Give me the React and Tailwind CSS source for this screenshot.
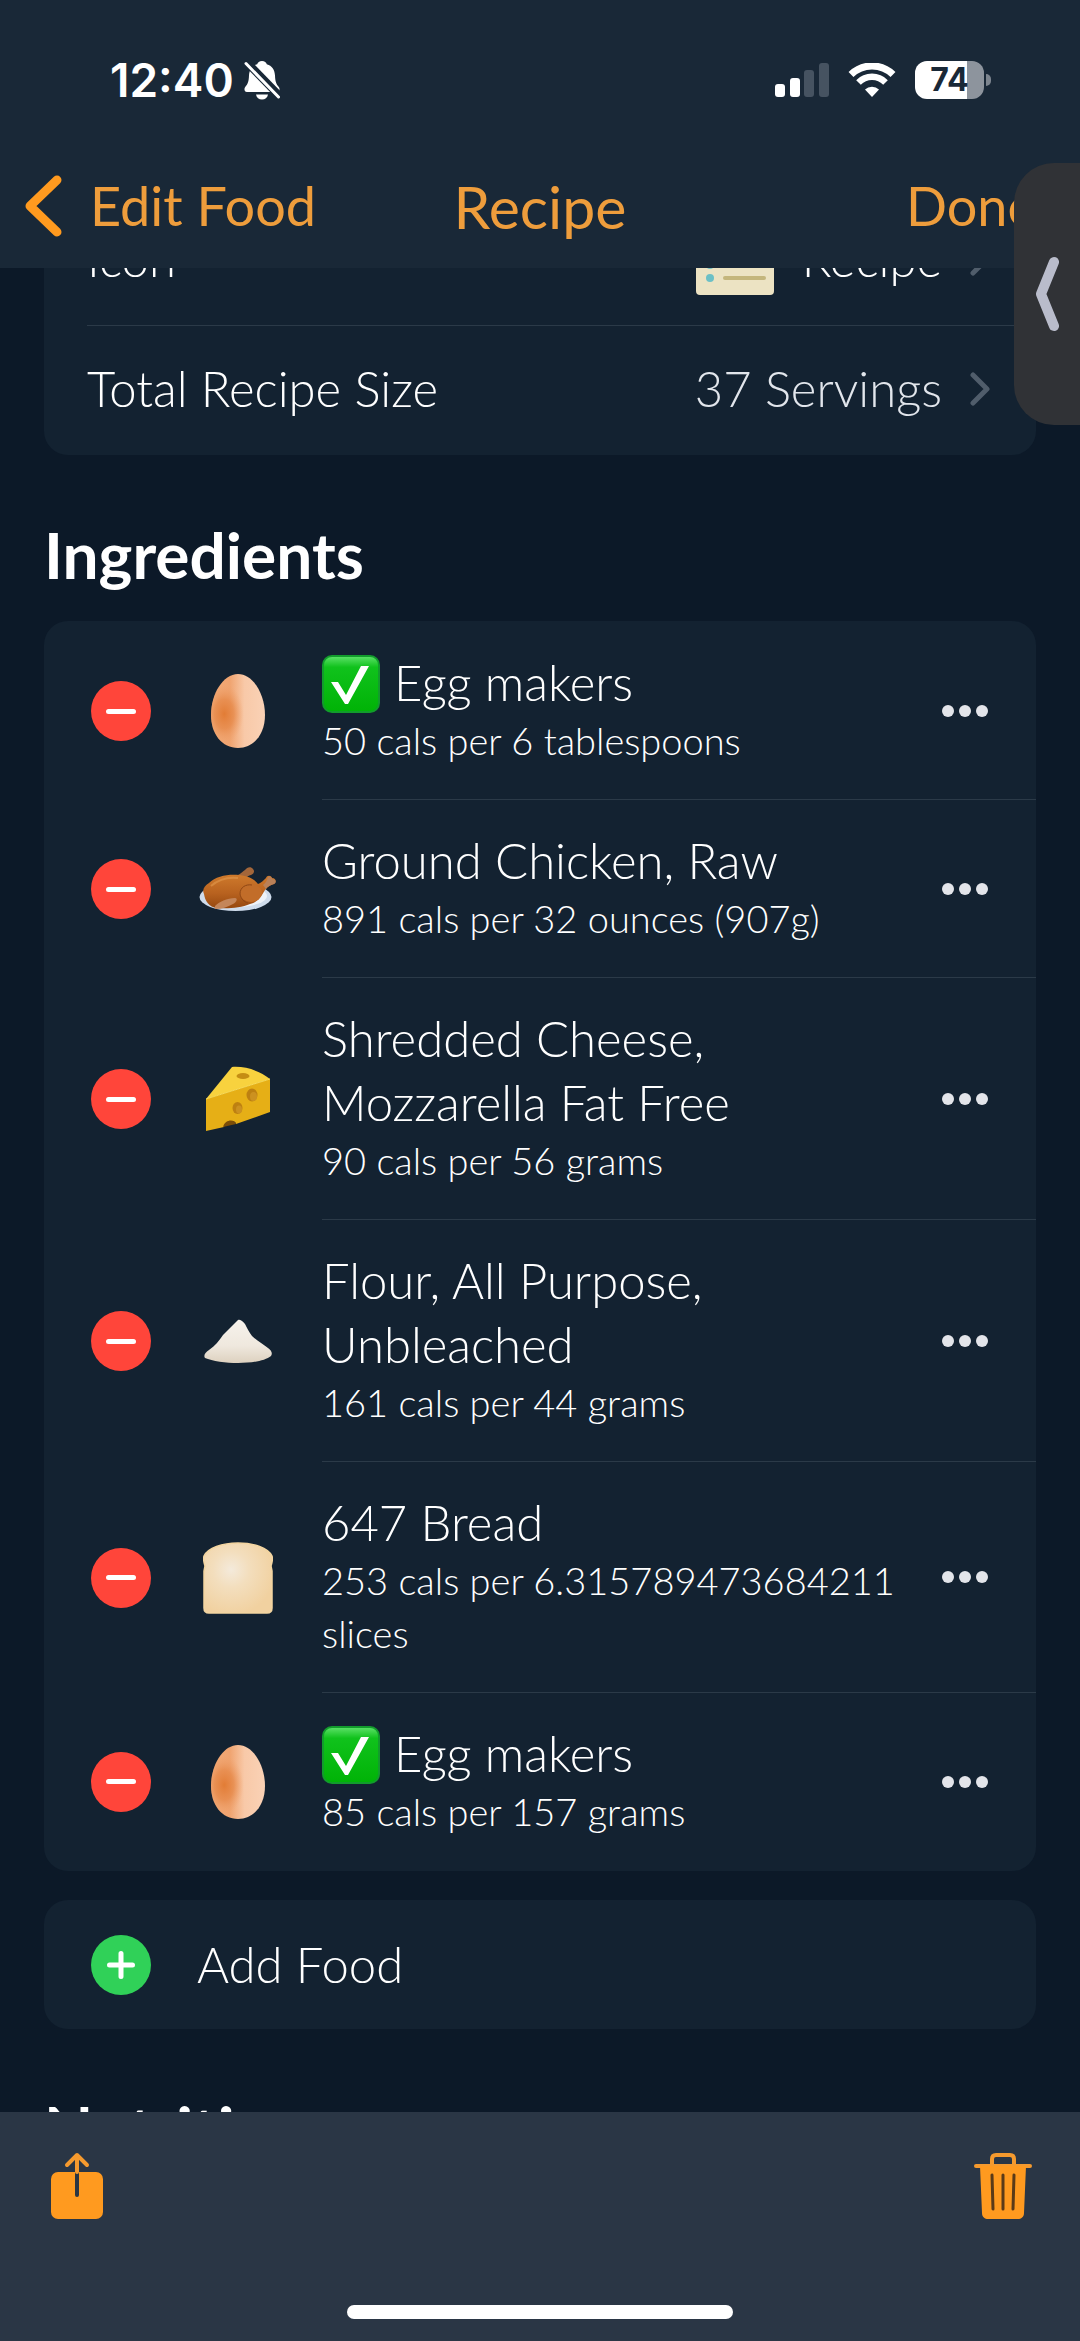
import React from 'react';

function BellOffIcon() {
  return (
    <svg viewBox="0 0 36 40" className="w-9 h-10" aria-label="Silent">
      <path d="M18 1c2.600 0 4.300 1.400 4.800 3.300 5.200 1.500 7.900 5.600 8.200 11.200.3 6.200 1 8.200 3.800 11.500 1.300 1.600 1 5-1.800 5H3c-2.800 0-3.100-3.400-1.800-5C4 23.700 4.700 21.700 5 15.500c.3-5.600 3-9.700 8.200-11.200C13.700 2.400 15.400 1 18 1z" fill="#fff" />
      <path d="M12 34.500h12c-.6 3.300-2.900 5-6 5s-5.400-1.700-6-5z" fill="#fff" />
      <path d="M-1 -1.500L38 38.500" stroke="#192837" strokeWidth="8" />
      <path d="M2 3.500L34.500 37" stroke="#fff" strokeWidth="3" strokeLinecap="round" />
    </svg>
  );
}

function SignalIcon() {
  return (
    <svg viewBox="0 0 54 34" className="w-[54px] h-[34px]" aria-label="Signal">
      <rect x="0" y="21" width="10" height="13" rx="3" fill="#fff" />
      <rect x="15" y="15" width="10" height="19" rx="3" fill="#fff" />
      <rect x="29" y="7" width="10" height="27" rx="3" fill="#465361" />
      <rect x="44" y="0" width="10" height="34" rx="3" fill="#465361" />
    </svg>
  );
}

function WifiIcon() {
  return (
    <svg viewBox="0 0 48 34" className="w-12 h-[34px]" fill="none" stroke="#fff" aria-label="Wi-Fi">
      <path d="M3 11.500a30 30 0 0 1 42 0" strokeWidth="7" />
      <path d="M10.500 19.500a19 19 0 0 1 27 0" strokeWidth="6.500" />
      <path d="M24 34l-7-7.500a10 10 0 0 1 14 0z" fill="#fff" stroke="none" />
    </svg>
  );
}

function Battery() {
  return (
    <div className="flex items-center gap-[2px]">
      <div className="w-[69px] h-[38px] rounded-xl bg-linear-to-r from-white from-75% to-[#8d949d] to-75% flex items-center justify-center text-[32px] leading-none font-bold text-[#192837]">
        74
      </div>
      <div className="w-[5px] h-3 rounded-r-full bg-[#7d858f]" />
    </div>
  );
}

function Chevron() {
  return (
    <svg viewBox="0 0 20 34" className="w-5 h-[34px]" fill="none" stroke="#505d6b" strokeWidth="5" strokeLinecap="round" strokeLinejoin="round" aria-hidden="true">
      <path d="M3 3l14 14L3 31" />
    </svg>
  );
}

function RecipeCardIcon() {
  return (
    <svg viewBox="0 0 78 72" className="w-[78px] h-[72px]" aria-hidden="true">
      <rect width="78" height="72" rx="4" fill="#ece3c3" />
      <rect width="78" height="14" rx="4" fill="#d9604f" />
      {[26, 42, 55].map((y) => (
        <g key={y}>
          <circle cx="14" cy={y} r="4" fill="#6cc0c6" />
          <path d={`M29 ${y}h39`} stroke="#c4b67c" strokeWidth="4" strokeLinecap="round" />
        </g>
      ))}
    </svg>
  );
}

function EggIcon() {
  return (
    <svg viewBox="0 0 54 74" className="w-[54px] h-[74px]" aria-hidden="true">
      <defs>
        <linearGradient id="eggBase" x1="0" x2="1" y1="0" y2="0">
          <stop offset="0" stopColor="#f2ab78" />
          <stop offset="0.35" stopColor="#f0a470" />
          <stop offset="0.62" stopColor="#f8c9a8" />
          <stop offset="1" stopColor="#fad2b6" />
        </linearGradient>
        <radialGradient id="eggShade" cx="0.25" cy="0.54" r="0.4" gradientTransform="translate(0.02 0) scale(0.9 1)">
          <stop offset="0" stopColor="#e27c35" />
          <stop offset="0.5" stopColor="#e58645" stopOpacity="0.7" />
          <stop offset="1" stopColor="#ee9f69" stopOpacity="0" />
        </radialGradient>
      </defs>
      <path d="M27 0c15 0 27 20 27 41 0 19-11 33-27 33S0 60 0 41C0 20 12 0 27 0z" fill="url(#eggBase)" />
      <path d="M27 0c15 0 27 20 27 41 0 19-11 33-27 33S0 60 0 41C0 20 12 0 27 0z" fill="url(#eggShade)" />
    </svg>
  );
}

function ChickenIcon() {
  return (
    <svg viewBox="0 0 78 44" className="w-[78px] h-11" aria-hidden="true">
      <defs>
        <linearGradient id="roast" x1="0" x2="0" y1="0" y2="1">
          <stop offset="0" stopColor="#cf7a2c" />
          <stop offset="0.55" stopColor="#b8621f" />
          <stop offset="1" stopColor="#96480f" />
        </linearGradient>
      </defs>
      <ellipse cx="36.500" cy="30" rx="36" ry="14" fill="#cfdcec" />
      <ellipse cx="37" cy="29" rx="31" ry="11" fill="#eef3f9" />
      <path d="M34 9c6 0 9-4 12-6 2-3 6-4 8-1 2 2 1 5-2 6-3 0-5 4-9 6z" fill="#a3663a" />
      <path d="M5 27c-2-4 0-8 5-11C17 9 29 7 40 8c11 1 16 5 19 9 3-1 5-3 8-6 1-3 5-3 6 0 4 0 5 4 2 6-3 1-6 2-9 6-4 7-7 12-15 14-9 4-23 5-33 4C10 40 6 34 5 27z" fill="url(#roast)" />
      <path d="M64 18c3-2 4-5 5-8 2-1 4 0 4 2 4 0 5 4 2 5-3 1-6 2-8 5z" fill="#b98058" />
      <ellipse cx="52" cy="26" rx="11" ry="9" fill="#c26d29" />
      <path d="M41 27c0-7 6-10 12-9M41 27c1 5 4 8 8 9" fill="none" stroke="#8f4714" strokeWidth="1" />
      <path d="M16 39c4-4 12-8 20-8 3 0 2 4-2 6-5 3-12 5-18 5z" fill="#c4865a" />
      <path d="M12 19c8-7 18-9 27-8" fill="none" stroke="#de9449" strokeWidth="2" opacity="0.7" />
    </svg>
  );
}

function CheeseIcon() {
  return (
    <svg viewBox="0 0 66 66" className="w-[66px] h-[66px]" aria-hidden="true">
      <path d="M1 33L27 1c14-1 28 4 38 12L1 33z" fill="#f8d23e" />
      <path d="M1 33L65 13v33l-34 12c0-4-10-5-12 3L1 65z" fill="#e6af16" />
      <path d="M1 33L65 13" stroke="#fbdc58" strokeWidth="1" />
      <path d="M18 61c2-8 12-8 13-3z" fill="#7b4d08" />
      <ellipse cx="38" cy="10" rx="6.500" ry="3" fill="#c58e13" />
      <ellipse cx="47" cy="29" rx="5.500" ry="6.500" fill="#bd8011" />
      <ellipse cx="48.500" cy="30.500" rx="3.500" ry="4.500" fill="#cc9120" />
      <ellipse cx="32.500" cy="42" rx="5" ry="6" fill="#bd8011" />
      <ellipse cx="34" cy="43.500" rx="3" ry="4" fill="#cc9120" />
    </svg>
  );
}

function FlourIcon() {
  return (
    <svg viewBox="0 0 68 44" className="w-[68px] h-11" aria-hidden="true">
      <defs>
        <linearGradient id="flour" x1="0" x2="0" y1="0" y2="1">
          <stop offset="0" stopColor="#f6f2ec" />
          <stop offset="0.6" stopColor="#efe8de" />
          <stop offset="1" stopColor="#ddd1bf" />
        </linearGradient>
      </defs>
      <path d="M34 1c3-1 5 2 7 4 2 4 4 8 7 12 5 5 11 8 16 12 3 2 5 5 3 8-6 5-20 7-33 7-12 0-26-2-33-5-2-3 1-6 4-8 6-4 10-9 14-15C24 11 29 6 34 1z" fill="url(#flour)" />
    </svg>
  );
}

function BreadIcon() {
  return (
    <svg viewBox="0 0 70 72" className="w-[70px] h-[72px]" aria-hidden="true">
      <defs>
        <radialGradient id="crumb" cx="0.4" cy="0.38" r="0.65">
          <stop offset="0" stopColor="#f4eadb" />
          <stop offset="0.4" stopColor="#f3debd" />
          <stop offset="1" stopColor="#f1d1a0" />
        </radialGradient>
      </defs>
      <path d="M1 14C5 6 19 1 35 1s30 5 34 13c1 4 0 7-1 10l1 5v37c0 3-2 5-5 5H6c-3 0-5-2-5-5V29l1-5c-1-3-2-6-1-10z" fill="url(#crumb)" stroke="#f3d5a0" strokeWidth="1.500" />
    </svg>
  );
}

function CheckMarkIcon() {
  return (
    <svg viewBox="0 0 58 58" className="inline-block align-[-12px] w-[58px] h-[58px] mr-[14px]" role="img" aria-label="Check">
      <defs>
        <linearGradient id="gloss" x1="0" x2="0" y1="0" y2="1">
          <stop offset="0" stopColor="#5fe36b" />
          <stop offset="0.2" stopColor="#10c21c" />
          <stop offset="1" stopColor="#00b306" />
        </linearGradient>
      </defs>
      <rect x="1" y="1" width="56" height="56" rx="9" fill="url(#gloss)" stroke="#129c2c" strokeWidth="2" />
      <path d="M9 27h7l8 13 15-29h8L26 49h-3z" fill="#fff" />
    </svg>
  );
}

function ShareIcon() {
  return (
    <svg viewBox="0 0 54 68" className="w-[54px] h-[68px]" fill="none" aria-hidden="true">
      <rect x="1" y="20" width="52" height="47" rx="7" fill="#ff9a1f" />
      <path d="M27 20v23" stroke="#2b3643" strokeWidth="4" strokeLinecap="round" />
      <path d="M27 20V3M17 13L27 3l10 10" stroke="#f59a2e" strokeWidth="4" strokeLinecap="round" strokeLinejoin="round" />
    </svg>
  );
}

function TrashIcon() {
  return (
    <svg viewBox="0 0 58 68" className="w-[58px] h-[68px]" fill="none" strokeLinecap="round" aria-hidden="true">
      <path d="M18 13V7c0-3 2-4 4-4h14c2 0 4 1 4 4v6" stroke="#f59a2e" strokeWidth="4" />
      <path d="M2 14h54" stroke="#f59a2e" strokeWidth="4" />
      <path d="M6 14h46l-2 47c0 4-3 6-6 6H14c-3 0-6-2-6-6z" fill="#ff9a1f" />
      <path d="M18 23l1 34M29 23v34M40 23l-1 34" stroke="#5a3a18" strokeWidth="3" />
    </svg>
  );
}

const ingredients = [
  { icon: EggIcon, name: 'Egg makers', checked: true, detail: '50 cals per 6 tablespoons' },
  { icon: ChickenIcon, name: 'Ground Chicken, Raw', detail: '891 cals per 32 ounces (907g)' },
  { icon: CheeseIcon, name: 'Shredded Cheese, Mozzarella Fat Free', detail: '90 cals per 56 grams' },
  { icon: FlourIcon, name: 'Flour, All Purpose, Unbleached', detail: '161 cals per 44 grams' },
  { icon: BreadIcon, name: '647 Bread', detail: '253 cals per 6.315789473684211 slices' },
  { icon: EggIcon, name: 'Egg makers', checked: true, detail: '85 cals per 157 grams' },
];

function IngredientRow({ item, last }) {
  const Icon = item.icon;
  return (
    <li className="flex items-stretch pl-[47px]">
      <div className="flex items-center shrink-0">
        <button aria-label={`Remove ${item.name}`} className="size-[60px] rounded-full bg-[#ff453a] flex items-center justify-center">
          <span className="w-[30px] h-[5px] rounded-full bg-white" />
        </button>
        <div className="w-[171px] pl-[2px] flex justify-center">
          <Icon />
        </div>
      </div>
      <div className={`flex-1 flex items-center pr-12 ${last ? '' : 'border-b border-[#2b3a48]'}`}>
        <div className="flex-1 pt-7 pb-8 pr-10">
          <h3 className="text-[49px] leading-[64px]">
            {item.checked && <CheckMarkIcon />}
            {item.name}
          </h3>
          <p className="text-[38px] leading-[53px]">{item.detail}</p>
        </div>
        <button aria-label={`More options for ${item.name}`} className="flex gap-[5px]">
          <span className="size-[12px] rounded-full bg-[#e3e5ea]" />
          <span className="size-[12px] rounded-full bg-[#e3e5ea]" />
          <span className="size-[12px] rounded-full bg-[#e3e5ea]" />
        </button>
      </div>
    </li>
  );
}

export default function App() {
  return (
    <div className="relative h-screen flex flex-col bg-[#0c1928] text-white font-light font-['Lato',sans-serif] overflow-hidden">
      <header className="shrink-0 bg-[#192837]">
        <div className="flex items-center justify-between h-[160px] pl-[110px] pr-[89px] font-['Inter',sans-serif]">
          <div className="flex items-center gap-[10px]">
            <span className="text-[46px] leading-none font-semibold">12:40</span>
            <BellOffIcon />
          </div>
          <div className="flex items-center gap-[19px]">
            <SignalIcon />
            <WifiIcon />
            <Battery />
          </div>
        </div>
        <nav className="grid grid-cols-3 items-center h-[108px] pb-4 px-6 text-[#ee9d3c] font-normal">
          <button className="flex items-center gap-7 text-[54px] leading-none">
            <svg viewBox="0 0 38 62" className="w-[38px] h-[62px]" fill="none" stroke="#ff9a1f" strokeWidth="9" strokeLinecap="round" strokeLinejoin="round" aria-hidden="true">
              <path d="M33 5L6 31l27 26" />
            </svg>
            Edit Food
          </button>
          <h1 className="text-center text-[59px] leading-none">Recipe</h1>
          <button className="text-right text-[54px] leading-none pr-5">Done</button>
        </nav>
      </header>

      <main className="flex-1 min-h-0 overflow-hidden px-11">
        {/* list is scrolled part of the way under the header */}
        <section className="-mt-[72px] rounded-3xl bg-[#132231] pl-[43px]">
          <div className="flex items-center justify-between h-[130px] pb-1 border-b border-[#2b3a48] pr-[46px] text-[49px]">
            <span>Icon</span>
            <span className="flex items-center gap-7">
              <RecipeCardIcon />
              <span>Recipe</span>
              <Chevron />
            </span>
          </div>
          <div className="flex items-center justify-between h-[129px] pb-1 pr-[46px] text-[49px]">
            <span>Total Recipe Size</span>
            <span className="flex items-center gap-7 text-[#e2e6ec]">
              37 Servings
              <Chevron />
            </span>
          </div>
        </section>

        <h2 className="mt-16 mb-[30px] text-[64px] leading-[72px] font-bold">Ingredients</h2>
        <ul className="rounded-3xl bg-[#132231] py-px">
          {ingredients.map((item, i) => (
            <IngredientRow key={i} item={item} last={i === ingredients.length - 1} />
          ))}
        </ul>

        <button className="mt-[29px] w-full h-[129px] rounded-3xl bg-[#132231] flex items-center gap-[46px] pl-[47px] text-[49px]">
          <span className="size-[60px] rounded-full bg-[#30d158] flex items-center justify-center">
            <svg viewBox="0 0 28 28" className="size-7" stroke="#fff" strokeWidth="5" strokeLinecap="round" aria-hidden="true">
              <path d="M14 2.500v23M2.500 14h23" />
            </svg>
          </span>
          Add Food
        </button>
        <h2 className="mt-16 text-[64px] leading-[72px] font-bold">Nutrition</h2>
      </main>

      <footer className="shrink-0 h-[229px] bg-[#2a3645] flex flex-col justify-between pt-10 pb-[22px]">
        <div className="flex items-center justify-between pl-[50px] pr-12">
          <button aria-label="Share"><ShareIcon /></button>
          <button aria-label="Delete"><TrashIcon /></button>
        </div>
        <div className="self-center w-[386px] h-[14px] rounded-full bg-white" />
      </footer>

      {/* edge handle floats above the page */}
      <button aria-label="Open side panel" className="absolute right-0 top-[163px] w-[66px] h-[262px] rounded-l-[40px] bg-[#303236] flex items-center justify-center">
        <svg viewBox="0 0 24 76" className="w-6 h-[76px]" fill="none" stroke="#b9bccb" strokeWidth="10" strokeLinecap="round" strokeLinejoin="round" aria-hidden="true">
          <path d="M19 6L6 38l13 32" />
        </svg>
      </button>
    </div>
  );
}
